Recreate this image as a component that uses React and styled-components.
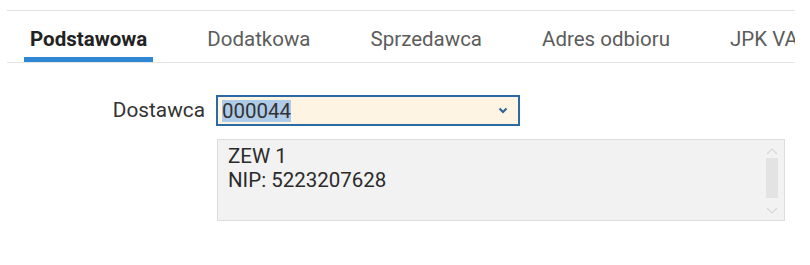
import React from "react";
import styled, { createGlobalStyle } from "styled-components";

const GlobalStyle = createGlobalStyle`
  html, body {
    margin: 0;
    padding: 0;
    background: #ffffff;
  }
  body {
    font-family: Roboto, "Liberation Sans", Arial, sans-serif;
  }
`;

const Page = styled.div`
  width: 788px;
  margin: 10px 0 0 7px;
  border-top: 1px solid #e2e2e2;
`;

const TabBar = styled.div`
  display: flex;
  gap: 48px;
  padding-left: 17px;
  border-bottom: 1px solid #e6e6e6;
  overflow: hidden;
  white-space: nowrap;
`;

const Tab = styled.div`
  padding: 16px 6px 6px;
  font-size: 20.5px;
  line-height: 24px;
  font-weight: ${(p) => (p.$active ? 700 : 400)};
  color: ${(p) => (p.$active ? "#222222" : "#5c5c5c")};
  border-bottom: 5px solid ${(p) => (p.$active ? "#2f86d2" : "transparent")};
  flex-shrink: 0;
`;

const Form = styled.div`
  display: grid;
  grid-template-columns: 198px 568px;
  column-gap: 12px;
  row-gap: 14px;
  padding-top: 33px;
  align-items: start;
`;

const Label = styled.div`
  text-align: right;
  font-size: 20.8px;
  line-height: 29px;
  color: #333333;
`;

const Select = styled.div`
  width: 302px;
  height: 29px;
  box-sizing: border-box;
  display: flex;
  align-items: center;
  justify-content: space-between;
  padding: 0 10px 0 4px;
  background: #fdf4e4;
  border: 1px solid #2c6aa3;
  box-shadow: 0 0 0 1px #2c6aa3;
  font-size: 20.5px;
  color: #333333;
`;

const Selected = styled.span`
  background: #aecbe8;
  line-height: 22px;
`;

const Chevron = styled.svg`
  width: 10px;
  height: 7px;
  display: block;
`;

const InfoBox = styled.div`
  grid-column: 2;
  height: 82px;
  box-sizing: border-box;
  display: flex;
  justify-content: space-between;
  background: #f2f2f2;
  border: 1px solid #dcdcdc;
`;

const InfoText = styled.div`
  padding: 4px 10px;
  font-size: 20.5px;
  line-height: 24px;
  color: #2b2b2b;
`;

const ScrollBar = styled.div`
  width: 13px;
  margin-right: 6px;
  display: flex;
  flex-direction: column;
  align-items: center;
  padding-top: 8px;
`;

const ScrollArrow = styled.svg`
  width: 12px;
  height: 7px;
  display: block;
`;

const Thumb = styled.div`
  width: 12px;
  height: 40px;
  margin: 3px 0 9px;
  background: #e3e3e3;
`;

const tabs = ["Podstawowa", "Dodatkowa", "Sprzedawca", "Adres odbioru", "JPK VAT"];

export default function App() {
  return (
    <>
      <GlobalStyle />
      <Page>
        <TabBar>
          {tabs.map((t, i) => (
            <Tab key={t} $active={i === 0}>
              {t}
            </Tab>
          ))}
        </TabBar>
        <Form>
          <Label>Dostawca</Label>
          <Select>
            <Selected>000044</Selected>
            <Chevron viewBox="0 0 10 7">
              <path d="M1.5 1.5l3.5 3.5 3.5-3.5" fill="none" stroke="#2f6196" strokeWidth="2" />
            </Chevron>
          </Select>
          <InfoBox>
            <InfoText>
              ZEW 1
              <br />
              NIP: 5223207628
            </InfoText>
            <ScrollBar>
              <ScrollArrow viewBox="0 0 12 7">
                <path d="M1 6l5-5 5 5" fill="none" stroke="#d8d8d8" strokeWidth="1.2" />
              </ScrollArrow>
              <Thumb />
              <ScrollArrow viewBox="0 0 12 7">
                <path d="M1 1l5 5 5-5" fill="none" stroke="#d8d8d8" strokeWidth="1.2" />
              </ScrollArrow>
            </ScrollBar>
          </InfoBox>
        </Form>
      </Page>
    </>
  );
}
